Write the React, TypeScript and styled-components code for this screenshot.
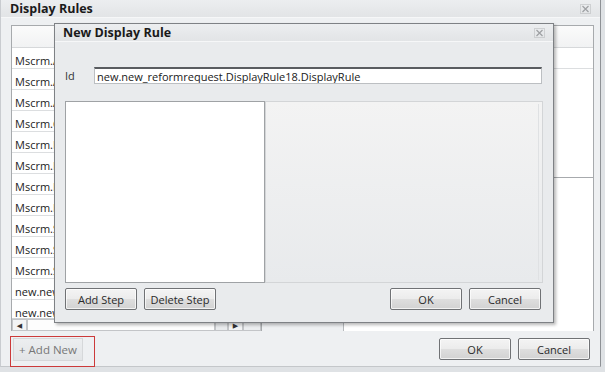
import React from 'react';
import styled, { createGlobalStyle } from 'styled-components';

const GlobalStyle = createGlobalStyle`
  html, body { margin: 0; padding: 0; }
  body {
    font-family: "Open Sans", "DejaVu Sans", sans-serif;
    font-size: 11px;
    color: #222;
  }
  * { box-sizing: border-box; }
`;

const Screen = styled.div`
  position: relative;
  width: 605px;
  height: 372px;
  overflow: hidden;
  background: #dfe2e5;
  display: flex;
`;

const Dialog = styled.div`
  width: 601px;
  height: 367px;
  border-left: 1px solid #c9ccd0;
  border-right: 1px solid #8e9195;
  border-bottom: 1px solid #c4c7ca;
  background: #eef0f2;
  display: flex;
  flex-direction: column;
`;

const TitleBar = styled.div<{ $height: number; $pad: number }>`
  height: ${p => p.$height}px;
  flex: none;
  display: flex;
  align-items: center;
  justify-content: space-between;
  padding: 0 ${p => p.$pad}px 0 ${p => p.$pad}px;
  background: linear-gradient(#eceef0, #e2e4e6);
  border-bottom: 1px solid #f6f7f8;
`;

const Title = styled.span`
  font-weight: 700;
  font-size: 12.5px;
  color: #1a1a1a;
`;

const CloseIcon = () => (
  <svg width="11" height="10" viewBox="0 0 11 10">
    <rect x="0.5" y="0.5" width="10" height="9" fill="none" stroke="#b4b6b8" strokeDasharray="1 1" />
    <path d="M2.5 2 L8.5 8 M8.5 2 L2.5 8" stroke="#9ea0a3" strokeWidth="1.2" />
  </svg>
);

const Content = styled.div`
  height: 313px;
  flex: none;
  display: flex;
  padding: 7px 6px 0 10px;
`;

const ListGrid = styled.div`
  width: 251px;
  display: flex;
  flex-direction: column;
  background: #fff;
  border: 1px solid #a7aaad;
  border-bottom: none;
`;

const GridHeader = styled.div`
  height: 22px;
  flex: none;
  background: linear-gradient(#fbfbfb, #f1f2f3);
  border-bottom: 1px solid #d6d8da;
`;

const Rows = styled.div`
  flex: 1;
  overflow: hidden;
`;

const Row = styled.div`
  height: 21px;
  padding: 3px 0 0 3px;
  overflow: hidden;
  border-bottom: 1px solid #dcdee0;
`;

// the modal hides everything past the first letters, so only those are kept
const RowText = styled.span`
  line-height: 19px;
  font-size: 11px;
  white-space: nowrap;
`;

const HScroll = styled.div`
  height: 13px;
  flex: none;
  display: flex;
  background: #e9ebed;
  border-top: 1px solid #cfd1d3;
`;

const ScrollPart = styled.div<{ $w: number; $bg: string }>`
  width: ${p => p.$w}px;
  flex: ${p => (p.$w ? 'none' : '1')};
  background: ${p => p.$bg};
  border: 1px solid #c3c5c8;
  display: flex;
  align-items: center;
  justify-content: center;
  font-size: 7px;
  color: #333;
`;

const RightCol = styled.div`
  flex: 1;
  display: flex;
  flex-direction: column;
  margin-left: 10px;
`;

const DetailTop = styled.div`
  height: 153px;
  flex: none;
  background: #fff;
  border: 1px solid #a7aaad;
`;

const DetailBottom = styled.div`
  flex: 1;
  margin-left: 71px;
  background: #fff;
  border-left: 1px solid #b6b9bc;
  border-right: 1px solid #a7aaad;
`;

const Footer = styled.div`
  flex: 1;
  display: flex;
  align-items: flex-start;
  justify-content: space-between;
  padding: 5px 10px 0 9px;
`;

const Highlight = styled.div`
  width: 85px;
  height: 31px;
  border: 1px solid #cc3a3a;
  padding: 1px 0 0 2px;
`;

const GhostButton = styled.div`
  width: 70px;
  height: 23px;
  display: flex;
  align-items: center;
  justify-content: center;
  font-size: 11.5px;
  color: #777;
  background: linear-gradient(#eceef0, #e3e5e7);
  border: 1px solid #d6d8da;
`;

const ButtonRow = styled.div<{ $gap: number }>`
  display: flex;
  gap: ${p => p.$gap}px;
  padding-top: 2px;
`;

const Button = styled.button`
  width: 72px;
  height: 22px;
  padding: 0;
  font-family: inherit;
  font-size: 11px;
  color: #2a2a2a;
  border: 1px solid #707275;
  border-radius: 2px;
  background: linear-gradient(#f4f4f4 0%, #ececec 48%, #dedede 52%, #d2d2d2 100%);
  box-shadow: inset 0 0 0 1px rgba(255, 255, 255, 0.7);
`;

const Modal = styled.div`
  position: absolute;
  left: 54px;
  top: 23px;
  width: 500px;
  height: 300px;
  display: flex;
  flex-direction: column;
  background: #e9ebed;
  border: 1px solid #7e8185;
  box-shadow: 2px 2px 3px rgba(0, 0, 0, 0.28);
`;

const ModalBody = styled.div`
  flex: 1;
  display: flex;
  flex-direction: column;
  padding: 25px 10px 0 10px;
`;

const IdRow = styled.div`
  display: flex;
  align-items: center;
  height: 17px;
`;

const Label = styled.span`
  width: 29px;
  font-size: 11px;
  color: #333;
`;

const TextInput = styled.div`
  width: 448px;
  height: 17px;
  line-height: 15px;
  padding-left: 2px;
  font-size: 11px;
  color: #1a1a1a;
  background: #fff;
  border: 1px solid #bcbfc2;
  border-top: 2px solid #595c60;
  white-space: nowrap;
  overflow: hidden;
`;

const Panels = styled.div`
  height: 182px;
  margin-top: 17px;
  display: flex;
`;

const StepList = styled.div`
  width: 200px;
  background: #fff;
  border: 1px solid #9fa2a5;
`;

const StepDetail = styled.div`
  width: 278px;
  position: relative;
  background: linear-gradient(#f3f3f3, #e8eaec);
  border: 1px solid #d3d5d7;
  &::after {
    content: '';
    position: absolute;
    top: 2px;
    bottom: 2px;
    right: 3px;
    border-right: 1px solid #dfe1e3;
  }
`;

const ModalButtons = styled.div`
  display: flex;
  justify-content: space-between;
  margin-top: 3px;
  padding-right: 2px;
`;

const rows = [
  'Mscrm.A',
  'Mscrm.A',
  'Mscrm.A',
  'Mscrm.C',
  'Mscrm.H',
  'Mscrm.H',
  'Mscrm.H',
  'Mscrm.R',
  'Mscrm.S',
  'Mscrm.S',
  'Mscrm.S',
  'new.new',
  'new.new',
];

export default function App() {
  return (
    <Screen>
      <GlobalStyle />
      <Dialog>
        <TitleBar $height={18} $pad={9}>
          <Title>Display Rules</Title>
          <CloseIcon />
        </TitleBar>
        <Content>
          <ListGrid>
            <GridHeader />
            <Rows>
              {rows.map((r, i) => (
                <Row key={i}>
                  <RowText>{r}</RowText>
                </Row>
              ))}
            </Rows>
            <HScroll>
              <ScrollPart $w={15} $bg="#f3f4f5">◀</ScrollPart>
              <ScrollPart $w={188} $bg="#fdfdfd" />
              <ScrollPart $w={0} $bg="#e9ebed" />
              <ScrollPart $w={15} $bg="#f3f4f5">▶</ScrollPart>
              <ScrollPart $w={18} $bg="#eceef0" />
            </HScroll>
          </ListGrid>
          <RightCol>
            <DetailTop>
              <GridHeader />
              <Row />
            </DetailTop>
            <DetailBottom />
          </RightCol>
        </Content>
        <Footer>
          <Highlight>
            <GhostButton>+ Add New</GhostButton>
          </Highlight>
          <ButtonRow $gap={7}>
            <Button>OK</Button>
            <Button>Cancel</Button>
          </ButtonRow>
        </Footer>
      </Dialog>

      <Modal>
        <TitleBar $height={18} $pad={8}>
          <Title>New Display Rule</Title>
          <CloseIcon />
        </TitleBar>
        <ModalBody>
          <IdRow>
            <Label>Id</Label>
            <TextInput>new.new_reformrequest.DisplayRule18.DisplayRule</TextInput>
          </IdRow>
          <Panels>
            <StepList />
            <StepDetail />
          </Panels>
          <ModalButtons>
            <ButtonRow $gap={7}>
              <Button>Add Step</Button>
              <Button>Delete Step</Button>
            </ButtonRow>
            <ButtonRow $gap={7}>
              <Button>OK</Button>
              <Button>Cancel</Button>
            </ButtonRow>
          </ModalButtons>
        </ModalBody>
      </Modal>
    </Screen>
  );
}
